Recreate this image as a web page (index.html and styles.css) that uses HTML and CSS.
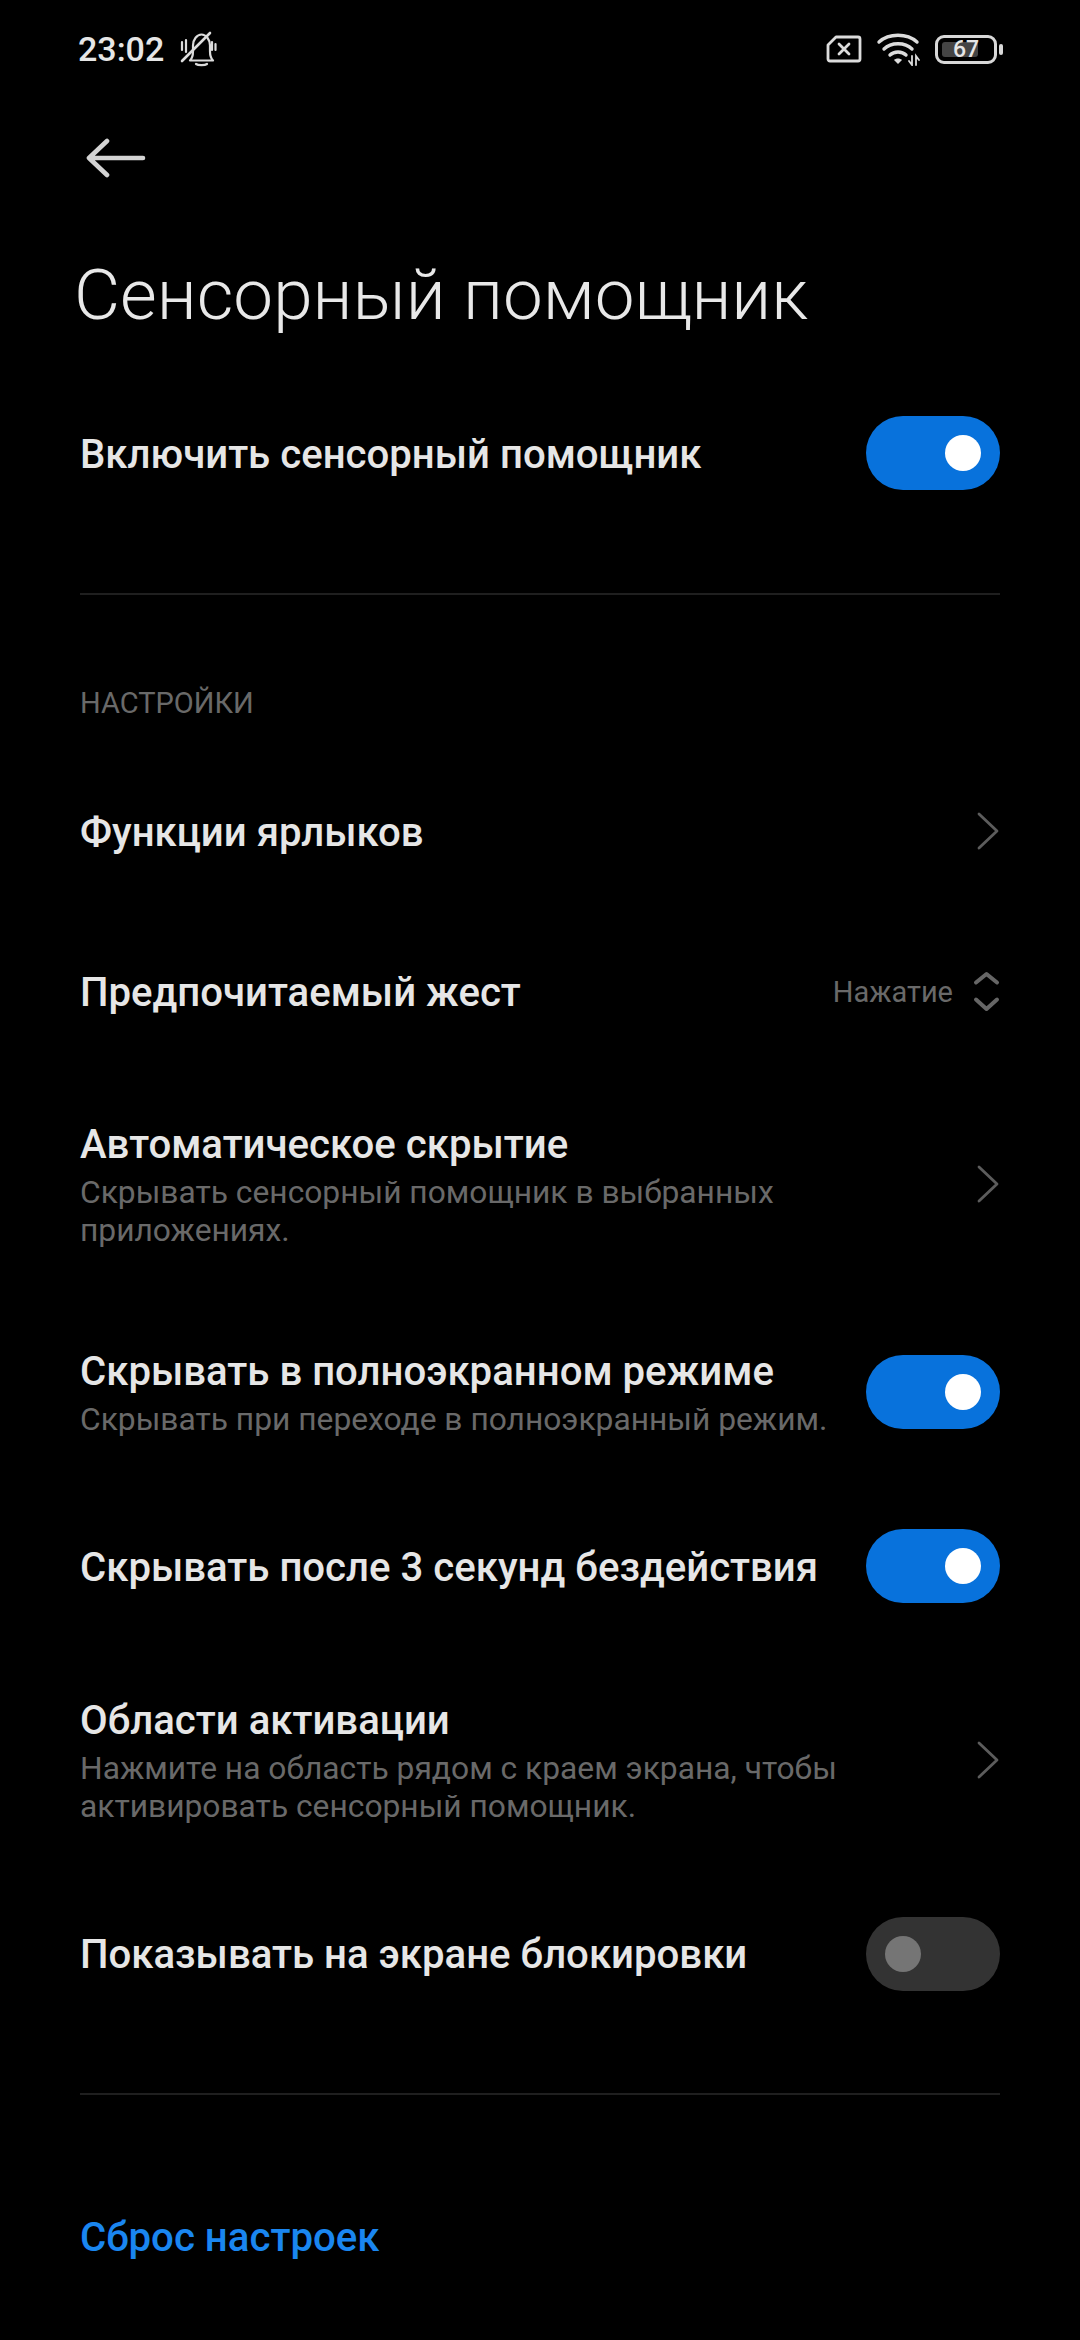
FILE: index.html
```html
<!DOCTYPE html>
<html lang="ru">
<head>
    <meta charset="UTF-8">
    <meta name="viewport" content="width=device-width, initial-scale=1.0">
    <title>Сенсорный помощник</title>
    <link rel="stylesheet" href="styles.css">
</head>
<body>
    <div class="statusbar">
        <div class="status-left">
            <span class="clock">23:02</span>
            <svg class="bell" viewBox="0 0 38 36" fill="none" stroke="#dcdcdc" stroke-width="2.2" stroke-linecap="round" stroke-linejoin="round">
                <path d="M11 29.5c2-2 3-4 3-9v-6c0-6 4-11 8.5-11s8.5 5 8.5 11v6c0 5 1 7 3 9z"/>
                <path d="M17 33c2 1.5 9 1.5 11 0"/>
                <path d="M3 11v8M7 9v12M33 11v8M36.5 13v6"/>
                <path d="M3 30L31 2" stroke-width="2.6"/>
            </svg>
        </div>
        <div class="status-right">
            <svg class="sim" viewBox="0 0 38 30" fill="none" stroke="#dcdcdc" stroke-width="2.8" stroke-linejoin="round" stroke-linecap="round">
                <path d="M11 3h22a2 2 0 0 1 2 2v20a2 2 0 0 1-2 2H5a2 2 0 0 1-2-2V11z"/>
                <path d="M14 10l10 10M24 10L14 20"/>
            </svg>
            <svg class="wifi" viewBox="0 0 44 34" fill="none" stroke="#dcdcdc" stroke-width="3.4" stroke-linecap="round">
                <path d="M3 10c10-9 28-9 38 0"/>
                <path d="M8 17c7-7 21-7 28 0"/>
                <path d="M14 23c4-4 12-4 16 0"/>
                <path d="M18 28c2-2 6-2 8 0l-4 4z" fill="#dcdcdc" stroke="none"/>
                <path d="M36 24v9l-3-4M40 33v-9l3 4" stroke-width="1.8"/>
            </svg>
            <div class="battery"><span class="battery-fill"></span><span class="battery-num">67</span></div>
            <span class="battery-cap"></span>
        </div>
    </div>

    <div class="nav">
        <svg class="back" viewBox="0 0 60 40" fill="none" stroke="#d4d4d4" stroke-width="4.6" stroke-linecap="round" stroke-linejoin="round">
            <path d="M3 20h54M21 3L3 20l18 17"/>
        </svg>
    </div>

    <h1 class="title">Сенсорный помощник</h1>

    <div class="row row-top">
        <div class="row-text"><div class="row-label">Включить сенсорный помощник</div></div>
        <div class="switch on"><span class="knob"></span></div>
    </div>

    <div class="divider divider-one"></div>

    <div class="section">НАСТРОЙКИ</div>

    <div class="row row-shortcuts">
        <div class="row-text"><div class="row-label">Функции ярлыков</div></div>
        <svg class="chevron" viewBox="0 0 24 40" fill="none" stroke="#5c5c5c" stroke-width="2.8" stroke-linecap="round" stroke-linejoin="round"><path d="M3 3l18 17L3 37"/></svg>
    </div>

    <div class="row row-gesture">
        <div class="row-text"><div class="row-label">Предпочитаемый жест</div></div>
        <span class="row-value">Нажатие</span>
        <svg class="updown" viewBox="0 0 28 44" fill="none" stroke="#666" stroke-width="4" stroke-linecap="round" stroke-linejoin="round"><path d="M4 12.500L14.500 4 25 12.500M4 29.500L14.500 39 25 29.500"/></svg>
    </div>

    <div class="row row-hide">
        <div class="row-text">
            <div class="row-label">Автоматическое скрытие</div>
            <div class="row-desc">Скрывать сенсорный помощник в выбранных приложениях.</div>
        </div>
        <svg class="chevron" viewBox="0 0 24 40" fill="none" stroke="#5c5c5c" stroke-width="2.8" stroke-linecap="round" stroke-linejoin="round"><path d="M3 3l18 17L3 37"/></svg>
    </div>

    <div class="row row-full">
        <div class="row-text">
            <div class="row-label">Скрывать в полноэкранном режиме</div>
            <div class="row-desc">Скрывать при переходе в полноэкранный режим.</div>
        </div>
        <div class="switch on"><span class="knob"></span></div>
    </div>

    <div class="row row-idle">
        <div class="row-text"><div class="row-label">Скрывать после 3 секунд бездействия</div></div>
        <div class="switch on"><span class="knob"></span></div>
    </div>

    <div class="row row-areas">
        <div class="row-text">
            <div class="row-label">Области активации</div>
            <div class="row-desc">Нажмите на область рядом с краем экрана, чтобы активировать сенсорный помощник.</div>
        </div>
        <svg class="chevron" viewBox="0 0 24 40" fill="none" stroke="#5c5c5c" stroke-width="2.8" stroke-linecap="round" stroke-linejoin="round"><path d="M3 3l18 17L3 37"/></svg>
    </div>

    <div class="row row-lock">
        <div class="row-text"><div class="row-label">Показывать на экране блокировки</div></div>
        <div class="switch off"><span class="knob"></span></div>
    </div>

    <div class="divider divider-two"></div>

    <div class="reset">Сброс настроек</div>
</body>
</html>
```

FILE: styles.css
```css
html, body {
    margin: 0;
    padding: 0;
    background: #000;
}
body {
    width: 1080px;
    height: 2340px;
    overflow: hidden;
    font-family: Roboto, "Noto Sans", sans-serif;
    color: #e6e6e6;
}
.statusbar {
    height: 98px;
    padding: 0 77px 0 78px;
    display: flex;
    justify-content: space-between;
    align-items: center;
}
.status-left, .status-right {
    display: flex;
    align-items: center;
}
.clock {
    font-size: 34px;
    font-weight: 500;
    color: #e6e6e6;
}
.bell {
    width: 38px;
    height: 36px;
    margin-left: 15px;
}
.sim {
    width: 38px;
    height: 30px;
}
.wifi {
    width: 44px;
    height: 34px;
    margin-left: 13px;
}
.battery {
    position: relative;
    box-sizing: border-box;
    width: 62px;
    height: 29px;
    margin-left: 15px;
    border: 3px solid #d8d8d8;
    border-radius: 9px;
    display: flex;
    justify-content: center;
    align-items: center;
}
.battery-fill {
    position: absolute;
    left: 4px;
    top: 4px;
    bottom: 4px;
    width: 36px;
    border-radius: 3px;
    background: #444;
}
.battery-num {
    position: relative;
    font-size: 23px;
    font-weight: 500;
    color: #e6e6e6;
}
.battery-cap {
    width: 4px;
    height: 11px;
    margin-left: 2px;
    border-radius: 2px;
    background: #d8d8d8;
}
.nav {
    margin-top: 40px;
    height: 40px;
    padding-left: 86px;
}
.back {
    display: block;
    width: 60px;
    height: 40px;
}
.title {
    margin: 77px 0 0 74px;
    font-size: 71px;
    line-height: 80px;
    font-weight: 300;
    color: #e8e8e8;
}
.row {
    display: flex;
    align-items: center;
    padding: 0 80px;
}
.row-text {
    flex: 1;
    min-width: 0;
}
.row-label {
    font-size: 40.15px;
    line-height: 54px;
    font-weight: 500;
    color: #e6e6e6;
}
.row-desc {
    margin-top: 2px;
    font-size: 31.75px;
    line-height: 38px;
    color: #696969;
    max-width: 780px;
}
.row-value {
    font-size: 29px;
    color: #696969;
    margin-right: 19px;
}
.switch {
    width: 134px;
    height: 74px;
    border-radius: 37px;
    display: flex;
    align-items: center;
    flex-shrink: 0;
}
.switch.on {
    background: #0872dc;
    justify-content: flex-end;
}
.switch.off {
    background: #333;
    justify-content: flex-start;
}
.knob {
    width: 36px;
    height: 36px;
    margin: 0 19px;
    border-radius: 50%;
    background: #fff;
}
.switch.off .knob {
    background: #757575;
}
.chevron {
    width: 24px;
    height: 40px;
}
.updown {
    width: 28px;
    height: 44px;
}
.divider {
    height: 2px;
    margin: 0 80px;
    background: #1f1f1f;
}
.section {
    margin: 91px 0 0 80px;
    font-size: 29px;
    line-height: 34px;
    color: #696969;
}
.row-top { margin-top: 81px; height: 74px; }
.divider-one { margin-top: 103px; }
.row-shortcuts { margin-top: 71px; height: 80px; }
.row-gesture { margin-top: 81px; height: 80px; }
.row-hide { margin-top: 86px; }
.row-full { margin-top: 95px; }
.row-idle { margin-top: 90px; height: 74px; }
.row-areas { margin-top: 91px; }
.row-lock { margin-top: 91px; height: 74px; }
.divider-two { margin-top: 102px; }
.row-top .row-label, .row-shortcuts .row-label, .row-idle .row-label { padding-top: 4px; }
.row-gesture .row-label, .row-lock .row-label { padding-top: 2px; }
.reset {
    margin: 119px 0 0 80px;
    font-size: 40.2px;
    line-height: 48px;
    font-weight: 500;
    color: #1a86f0;
}
```
